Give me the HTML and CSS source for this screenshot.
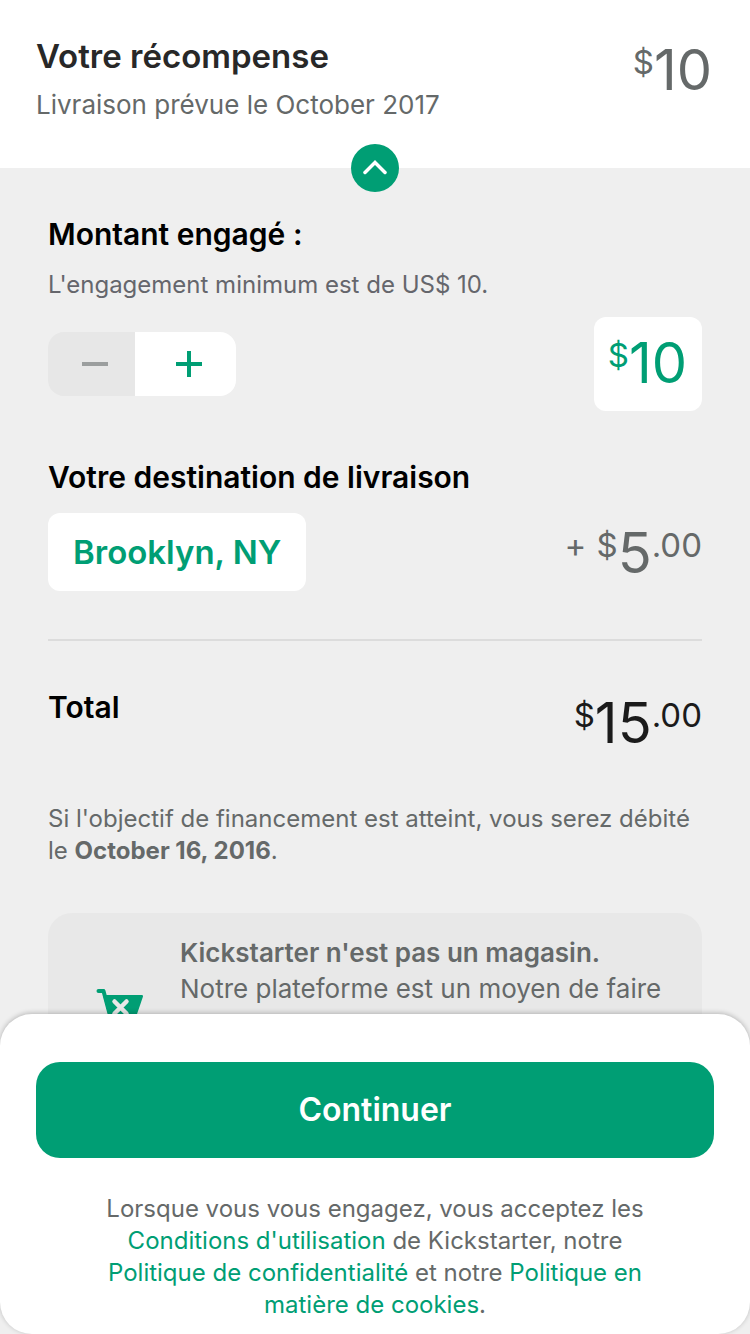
FILE: index.html
```html
<!DOCTYPE html>
<html lang="fr">
<head>
<meta charset="utf-8">
<meta name="viewport" content="width=device-width, initial-scale=1">
<title>Votre récompense</title>
<link rel="stylesheet" href="styles.css">
</head>
<body>
<div class="app">
  <header class="reward">
    <div>
      <h1 class="reward-title">Votre récompense</h1>
      <p class="reward-delivery">Livraison prévue le October 2017</p>
    </div>
    <p class="amount muted"><span class="amount-small">$</span><span class="amount-big">10</span></p>
    <button class="collapse" type="button" aria-label="Réduire">
      <svg width="24" height="16" viewBox="0 0 24 16"><path d="M2 12.500 12 2.500 22 12.500" fill="none" stroke="#fff" stroke-width="3.500" stroke-linecap="round"/></svg>
    </button>
  </header>

  <main class="content">
    <section class="pledge">
      <h2 class="heading">Montant engagé :</h2>
      <p class="hint">L'engagement minimum est de US$ 10.</p>
      <div class="row pledge-row">
        <div class="stepper">
          <button class="step step-minus" type="button" aria-label="Diminuer" disabled>
            <svg width="28" height="28" viewBox="0 0 28 28"><path d="M1 14h26" stroke="#9b9e9e" stroke-width="4"/></svg>
          </button>
          <button class="step step-plus" type="button" aria-label="Augmenter">
            <svg width="28" height="28" viewBox="0 0 28 28"><path d="M1 14h26M14 1v26" stroke="#009e74" stroke-width="4"/></svg>
          </button>
        </div>
        <button class="amount amount-box" type="button"><span class="amount-small">$</span><span class="amount-big">10</span></button>
      </div>
    </section>

    <section class="shipping">
      <h2 class="heading">Votre destination de livraison</h2>
      <div class="row">
        <button class="location" type="button">Brooklyn, NY</button>
        <p class="amount muted"><span class="amount-plus">+</span><span class="amount-small">$</span><span class="amount-big">5</span><span class="amount-small">.00</span></p>
      </div>
    </section>

    <section class="row total">
      <h2 class="heading">Total</h2>
      <p class="amount"><span class="amount-small">$</span><span class="amount-big">15</span><span class="amount-small">.00</span></p>
    </section>

    <p class="notice">Si l'objectif de financement est atteint, vous serez débité le <strong class="notice-date">October 16, 2016</strong>.</p>

    <aside class="info">
      <svg class="cart" width="48" height="48" viewBox="0 0 48 48">
        <path d="M2.500 2H7.500L16 34H38" fill="none" stroke="#009e74" stroke-width="4" stroke-linecap="round" stroke-linejoin="round"/>
        <path d="M7 6H45.500Q47.500 6 47 7.500L39 31H14z" fill="#009e74"/>
        <path d="M19 12.500 31 24.500M31 12.500 19 24.500" stroke="#e8e8e8" stroke-width="4.500" stroke-linecap="round" transform="translate(-.5 0)"/>
        <circle cx="18" cy="42" r="4" fill="#009e74"/><circle cx="35" cy="42" r="4" fill="#009e74"/>
      </svg>
      <p class="info-text"><strong>Kickstarter n'est pas un magasin.</strong><br>Notre plateforme est un moyen de faire</p>
    </aside>
  </main>

  <footer class="sheet">
    <button class="continue" type="button">Continuer</button>
    <p class="terms">Lorsque vous vous engagez, vous acceptez les <a href="#conditions">Conditions d'utilisation</a> de Kickstarter, notre <a href="#confidentialite">Politique de confidentialité</a> et notre <a href="#cookies">Politique en matière de cookies</a>.</p>
  </footer>
</div>
</body>
</html>
```
FILE: styles.css
```css
* {
  box-sizing: border-box;
}

body,
h1,
h2,
p {
  margin: 0;
}

body {
  background: #efefef;
  color: #656969;
  font-family: Inter, "Liberation Sans", sans-serif;
  font-size: 24px;
  line-height: 32px;
}

button {
  margin: 0;
  padding: 0;
  border: 0;
  font: inherit;
}

svg {
  display: block;
}

strong {
  font-weight: 600;
}

.app {
  display: flex;
  flex-direction: column;
  height: 100vh;
}

.reward {
  position: relative;
  z-index: 1;
  flex: none;
  display: flex;
  justify-content: space-between;
  padding: 36px 38px 46px 36px;
  background: #fff;
}

.reward .amount {
  padding-top: 6px;
}

.reward-title {
  color: #282828;
  font-size: 33px;
  font-weight: 600;
  line-height: 40px;
}

.reward-delivery {
  margin-top: 12px;
  font-size: 26px;
  line-height: 34px;
}

.collapse {
  position: absolute;
  bottom: -24px;
  left: calc(50% - 24px);
  display: grid;
  place-items: center;
  width: 48px;
  height: 48px;
  border-radius: 50%;
  background: #009e74;
}

.amount {
  display: flex;
  align-items: flex-start;
  color: #1b1b1b;
}

.muted {
  color: #656969;
}

.amount-small,
.amount-plus {
  font-size: 33px;
  line-height: 40px;
}

.amount-plus {
  margin-right: 10px;
}

.amount-big {
  font-size: 56px;
  line-height: 56px;
}

.content {
  flex: 1;
  min-height: 0;
  overflow-y: auto;
  scrollbar-width: none;
  padding: 48px 48px 0;
}

.row {
  display: flex;
  justify-content: space-between;
}

.heading {
  color: #000;
  font-size: 30px;
  font-weight: 600;
  line-height: 36px;
}

.hint {
  margin-top: 17px;
  color: #65666c;
}

.pledge-row {
  align-items: center;
  margin-top: 16px;
}

.stepper {
  display: flex;
  overflow: hidden;
  height: 64px;
  border-radius: 16px;
}

.step {
  display: grid;
  place-items: center;
}

.step-minus {
  width: 87px;
  padding-left: 7px;
  background: #e7e7e7;
}

.step-plus {
  width: 101px;
  padding-left: 7px;
  background: #fff;
}

.amount-box {
  padding: 18px 15px 20px 14px;
  border-radius: 12px;
  background: #fff;
  color: #009e74;
}

.shipping {
  margin-top: 48px;
  padding-bottom: 48px;
  border-bottom: 2px solid #dcdcdc;
}

.shipping .row {
  margin-top: 18px;
}

.shipping .amount {
  padding-top: 12px;
}

.location {
  padding: 19px 25px;
  border-radius: 12px;
  background: #fff;
  color: #009e74;
  font-size: 33px;
  font-weight: 600;
  line-height: 40px;
}

.total {
  padding-top: 48px;
}

.total .amount {
  padding-top: 6px;
}

.notice {
  margin-top: 52px;
}

.notice-date {
  font-weight: 700;
}

.info {
  display: flex;
  gap: 36px;
  min-height: 180px;
  margin-top: 46px;
  padding: 22px 40px 22px 48px;
  border-radius: 24px;
  background: #e8e8e8;
}

.cart {
  flex: none;
  margin-top: 54px;
}

.info-text {
  font-size: 26px;
  line-height: 36px;
}

.sheet {
  position: relative;
  flex: none;
  margin-top: -32px;
  padding: 48px 36px 13px;
  border-radius: 32px;
  background: #fff;
  box-shadow: 0 -1px 5px rgba(0, 0, 0, 0.24);
}

.continue {
  width: 100%;
  padding: 28px 24px;
  border-radius: 24px;
  background: #009e74;
  color: #fff;
  font-size: 32px;
  font-weight: 600;
  line-height: 40px;
}

.terms {
  max-width: 560px;
  margin: 35px auto 0;
  text-align: center;
}

.terms a {
  color: #009e74;
  text-decoration: none;
}
```
